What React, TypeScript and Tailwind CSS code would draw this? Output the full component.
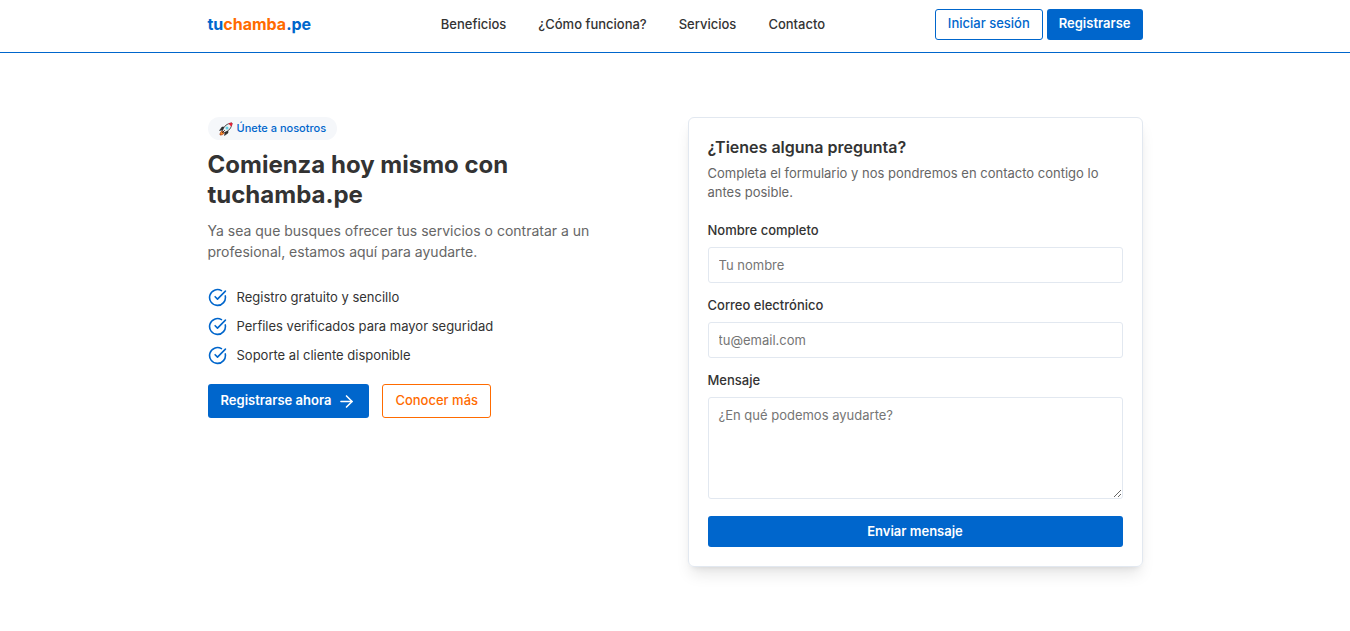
import { useId } from "react";
import type { ReactNode } from "react";
import { ArrowRight, CircleCheckBig } from "lucide-react";

const links = ["Beneficios", "¿Cómo funciona?", "Servicios", "Contacto"];
const perks = [
  "Registro gratuito y sencillo",
  "Perfiles verificados para mayor seguridad",
  "Soporte al cliente disponible",
];

const fieldClass =
  "block w-full rounded-[3px] border border-[#e2e8f0] bg-white px-2.5 text-[13px] leading-5 text-[#333] placeholder:text-[#757575] outline-none focus:border-[#0066cc]";

function Rocket() {
  return (
    <svg width="14" height="14" viewBox="0 0 28 28" aria-hidden="true">
      <path d="M11 10H6l-5 7 7-1zM18 17v5l-7 5 1-7z" fill="#333" stroke="#222" strokeWidth="1" />
      <path d="M6 18c-3 1-4 5-4 8 4 0 7-1 8-4z" fill="#f78b28" stroke="#a33a14" strokeWidth="1.5" />
      <path d="M7 17C10 8 16 3 26 2c-1 10-6 16-15 19z" fill="#eef1f3" stroke="#222" strokeWidth="1.6" />
      <path d="M20 3l6-1-1 6c-2-1-4-3-5-5z" fill="#e81c34" stroke="#e81c34" strokeWidth="1.5" />
      <circle cx="16" cy="12" r="3" fill="#62cfe6" />
      <path d="M6 22l6-6" stroke="#222" strokeWidth="1.5" />
    </svg>
  );
}

function Field({ label, children }: { label: string; children: (id: string) => ReactNode }) {
  const id = useId();
  return (
    <div className="flex flex-col gap-[7px]">
      <label htmlFor={id} className="text-[13px] leading-5 font-medium text-[#333]">
        {label}
      </label>
      {children(id)}
    </div>
  );
}

export default function App() {
  return (
    <div className="min-h-screen bg-white font-['Inter',sans-serif] text-[#333]">
      <header className="border-b border-[#0066cc]">
        <div className="mx-auto flex h-[52px] max-w-[935px] items-center justify-between pb-1">
          <a href="#" className="pr-5 text-[16px] leading-6 font-bold text-[#0066cc]">
            tu<span className="text-[#ff6b00]">chamba</span>.pe
          </a>
          <nav className="flex gap-8">
            {links.map((l) => (
              <a key={l} href="#" className="text-[13px] leading-5 font-medium">
                {l}
              </a>
            ))}
          </nav>
          <div className="flex gap-1">
            <button className="h-[31px] rounded-[3px] border border-[#0066cc] px-3 text-[13px] font-medium text-[#0066cc]">
              Iniciar sesión
            </button>
            <button className="h-[31px] rounded-[3px] bg-[#0066cc] px-3 text-[13px] font-semibold text-white">
              Registrarse
            </button>
          </div>
        </div>
      </header>

      <main className="mx-auto grid max-w-[935px] grid-cols-1 gap-6 py-16 md:grid-cols-2">
        <section>
          <div className="flex">
            <span className="flex h-[23px] items-center gap-1 rounded-full bg-[#f5f7fa] px-[11px] text-[11px] font-medium text-[#0066cc]">
              <Rocket />
              Únete a nosotros
            </span>
          </div>
          <h1 className="mt-2.5 text-[24px] leading-[30px] font-bold">
            Comienza hoy mismo con
            <br />
            tuchamba.pe
          </h1>
          <p className="mt-2.5 max-w-[410px] text-[14px] leading-[21px] text-[#666]">
            Ya sea que busques ofrecer tus servicios o contratar a un profesional, estamos aquí para ayudarte.
          </p>
          <ul className="mt-[25px] flex flex-col gap-[9px]">
            {perks.map((p) => (
              <li key={p} className="flex items-center gap-2.5 text-[13px] leading-5">
                <CircleCheckBig size={19} className="text-[#0066cc]" />
                {p}
              </li>
            ))}
          </ul>
          <div className="mt-[19px] flex gap-[13px]">
            <button className="flex h-[34px] items-center gap-1.5 rounded-[3px] bg-[#0066cc] px-[13px] text-[13px] font-semibold text-white">
              Registrarse ahora
              <ArrowRight size={19} />
            </button>
            <button className="h-[34px] rounded-[3px] border border-[#ff6b00] px-3 text-[13px] font-medium text-[#ff6b00]">
              Conocer más
            </button>
          </div>
        </section>

        <section className="w-full max-w-[455px] justify-self-end rounded-md border border-[#e2e8f0] p-[19px] shadow-lg">
          <h2 className="text-[16px] leading-5 font-semibold">¿Tienes alguna pregunta?</h2>
          <p className="mt-[7px] text-[13px] leading-[19px] text-[#666]">
            Completa el formulario y nos pondremos en contacto contigo lo antes posible.
          </p>
          <form className="mt-[18px] flex flex-col gap-3" onSubmit={(e) => e.preventDefault()}>
            <Field label="Nombre completo">
              {(id) => <input id={id} type="text" placeholder="Tu nombre" className={`${fieldClass} h-9`} />}
            </Field>
            <Field label="Correo electrónico">
              {(id) => <input id={id} type="email" placeholder="tu@email.com" className={`${fieldClass} h-9`} />}
            </Field>
            <Field label="Mensaje">
              {(id) => (
                <textarea id={id} placeholder="¿En qué podemos ayudarte?" className={`${fieldClass} h-[102px] py-[7px]`} />
              )}
            </Field>
            <button className="mt-[5px] h-[31px] rounded-[3px] bg-[#0066cc] text-[13px] font-semibold text-white">
              Enviar mensaje
            </button>
          </form>
        </section>
      </main>
    </div>
  );
}
